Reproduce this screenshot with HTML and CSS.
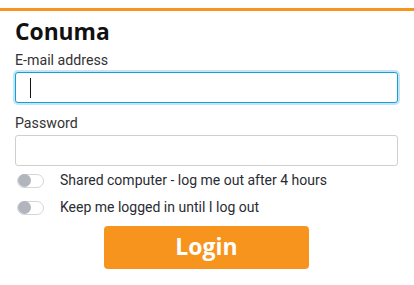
FILE: index.html
```html
<!DOCTYPE html>
<html lang="en">
<head>
<meta charset="utf-8">
<title>Conuma</title>
<link rel="stylesheet" href="styles.css">
</head>
<body>
<div class="page">
  <form class="login">
    <h1 class="title">Conuma</h1>
    <label class="label" for="email">E-mail address</label>
    <div class="field is-focused">
      <input class="input" id="email" type="email">
      <span class="caret"></span>
    </div>
    <label class="label label-second" for="password">Password</label>
    <div class="field">
      <input class="input" id="password" type="password">
    </div>
    <div class="options">
      <label class="option">
        <span class="toggle"><span class="knob"></span></span>
        <span class="option-text">Shared computer - log me out after 4 hours</span>
      </label>
      <label class="option">
        <span class="toggle"><span class="knob"></span></span>
        <span class="option-text">Keep me logged in until I log out</span>
      </label>
    </div>
    <div class="actions">
      <button class="btn-login" type="button">Login</button>
    </div>
  </form>
</div>
</body>
</html>
```

FILE: styles.css
```css
* { box-sizing: border-box; }

html, body {
  margin: 0;
  padding: 0;
  background: #ffffff;
}

body {
  padding-top: 8px;
  font-family: Roboto, "Liberation Sans", sans-serif;
  color: #333333;
}

.page {
  border-top: 3px solid #f7941d;
  padding: 0 16px 0 15px;
}

.login {
  display: flex;
  flex-direction: column;
}

.title {
  margin: 7px 0 6px 0;
  font-family: "Open Sans", "Noto Sans", sans-serif;
  font-weight: 700;
  font-size: 22.8px;
  line-height: 28px;
  color: #111111;
}

.label {
  display: block;
  font-size: 14.2px;
  line-height: 17px;
  color: #333333;
}

.label-second {
  margin-top: 12px;
}

.field {
  position: relative;
  margin-top: 3px;
}

.input {
  display: block;
  width: 100%;
  height: 31px;
  margin: 0;
  padding: 0 14px;
  border: 1px solid #cfcfcf;
  border-radius: 3px;
  background: #ffffff;
  font-family: Roboto, "Liberation Sans", sans-serif;
  font-size: 14px;
  outline: none;
  caret-color: transparent;
}

.is-focused .input {
  border-color: #169fd6;
  box-shadow: 0 0 0 2px rgba(120, 200, 235, 0.45);
}

.caret {
  position: absolute;
  left: 15px;
  top: 6px;
  width: 1px;
  height: 20px;
  background: #111111;
}

.options {
  display: flex;
  flex-direction: column;
  margin-top: 1px;
}

.option {
  display: flex;
  align-items: center;
  height: 27px;
  padding-left: 2px;
}

.toggle {
  position: relative;
  display: block;
  width: 27px;
  height: 14px;
  border: 1px solid #d3d6da;
  border-radius: 7px;
  background: #ffffff;
  flex: none;
}

.knob {
  position: absolute;
  left: 0;
  top: -0.5px;
  width: 13px;
  height: 13px;
  border-radius: 50%;
  background: #b1b6bd;
}

.option-text {
  margin-left: 16px;
  font-size: 14px;
  line-height: 17px;
  color: #2a2c34;
}

.actions {
  display: flex;
  justify-content: center;
  margin-top: 5px;
}

.btn-login {
  width: 205px;
  height: 43px;
  margin: 0;
  padding: 0 0 4px 0;
  border: none;
  border-radius: 4px;
  background: #f7941d;
  color: #ffffff;
  font-family: "Open Sans", "Noto Sans", sans-serif;
  font-weight: 700;
  font-size: 23px;
  line-height: 28px;
}
```
